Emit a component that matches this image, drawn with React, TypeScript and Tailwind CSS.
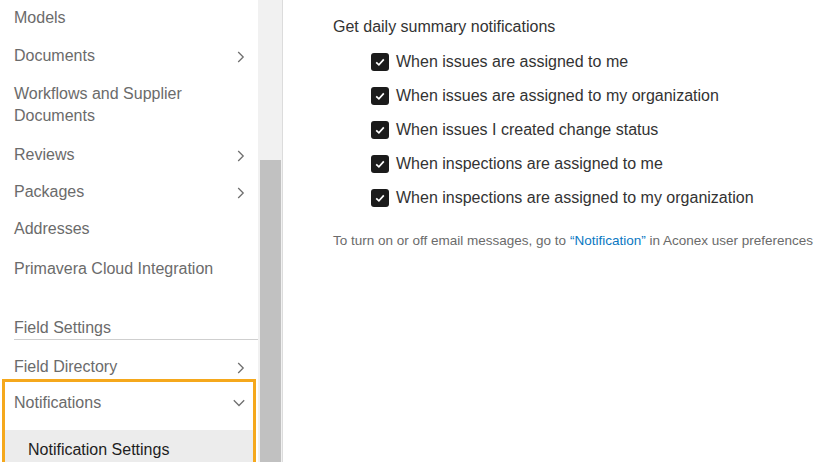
import React from 'react';

const Chevron: React.FC<{ down?: boolean }> = ({ down }) => (
  <svg width="12" height="12" viewBox="0 0 12 12" className="text-[#6f6f6f]">
    {down ? (
      <path d="M0.8 3.3 L6 8.5 L11.2 3.3" fill="none" stroke="currentColor" strokeWidth="1.3" />
    ) : (
      <path d="M3.2 1 L8.2 6 L3.2 11" fill="none" stroke="currentColor" strokeWidth="1.3" />
    )}
  </svg>
);

const Check: React.FC = () => (
  <span className="flex h-[18px] w-[18px] shrink-0 items-center justify-center rounded-[3px] bg-[#1b1b1b]">
    <svg width="12" height="12" viewBox="0 0 12 12">
      <path d="M2.2 6.3 L4.9 8.8 L9.8 3.4" fill="none" stroke="#fff" strokeWidth="1.7" />
    </svg>
  </span>
);

type NavItem = { label: string; chevron?: boolean; cls: string };

const nav: NavItem[] = [
  { label: 'Models', cls: 'h-[35px] pt-[7px]' },
  { label: 'Documents', chevron: true, cls: 'h-[42px] pt-[10px]' },
  { label: 'Workflows and Supplier Documents', cls: 'h-[56px] pt-[6px]' },
  { label: 'Reviews', chevron: true, cls: 'h-[44px] pt-[11px]' },
  { label: 'Packages', chevron: true, cls: 'h-[30px] pt-[4px]' },
  { label: 'Addresses', cls: 'h-[44px] pt-[11px]' },
  { label: 'Primavera Cloud Integration', cls: 'h-[36px] pt-[7px]' },
];

const options = [
  'When issues are assigned to me',
  'When issues are assigned to my organization',
  'When issues I created change status',
  'When inspections are assigned to me',
  'When inspections are assigned to my organization',
];

export default function App() {
  return (
    <div className="flex h-[462px] w-[836px] overflow-hidden bg-white font-['Liberation_Sans',Arial,sans-serif]">
      <aside className="w-[258px] shrink-0 text-[16px] leading-[22px] text-[#6b6b6b]">
        {nav.map(item => (
          <div key={item.label} className={`flex items-start justify-between pl-[14px] pr-[11px] ${item.cls}`}>
            <span className="max-w-[212px]">{item.label}</span>
            {item.chevron && (
              <span className="mt-[6px]">
                <Chevron />
              </span>
            )}
          </div>
        ))}

        <div className="ml-[14px] h-[53px] border-b border-[#cfcfcf] pt-[30px]">Field Settings</div>

        <div className="flex h-[42px] items-start justify-between pl-[14px] pr-[11px] pt-[16px]">
          <span>Field Directory</span>
          <span className="mt-[6px]">
            <Chevron />
          </span>
        </div>

        <div className="mx-[5px] outline-[3px] outline-solid outline-[#f5a81c]">
          <div className="flex h-[48px] items-start justify-between pl-[9px] pr-[8px] pt-[10px]">
            <span>Notifications</span>
            <span className="mt-[5px]">
              <Chevron down />
            </span>
          </div>
          <div className="h-[40px] bg-[#ececec] pl-[23px] pt-[9px] text-[#1e1e1e]">Notification Settings</div>
        </div>
      </aside>

      <div className="relative w-[25px] shrink-0 border-r border-[#dcdcdc] bg-[#f1f1f1]">
        <div className="absolute bottom-0 left-[2px] top-[160px] w-[21px] bg-[#c1c1c1]" />
      </div>

      <main className="flex-1 pl-[50px] pt-[16px] text-[16px] leading-[22px] text-[#333]">
        <div>Get daily summary notifications</div>
        <div className="mt-[13px] flex flex-col gap-[12px] pl-[38px]">
          {options.map(o => (
            <label key={o} className="flex items-center gap-[7px]">
              <Check />
              <span>{o}</span>
            </label>
          ))}
        </div>
        <p className="mt-[23px] whitespace-nowrap text-[13.5px] leading-[18px] text-[#6b6b6b]">
          To turn on or off email messages, go to <span className="text-[#0a78c2]">“Notification”</span> in Aconex user
          preferences
        </p>
      </main>
    </div>
  );
}
